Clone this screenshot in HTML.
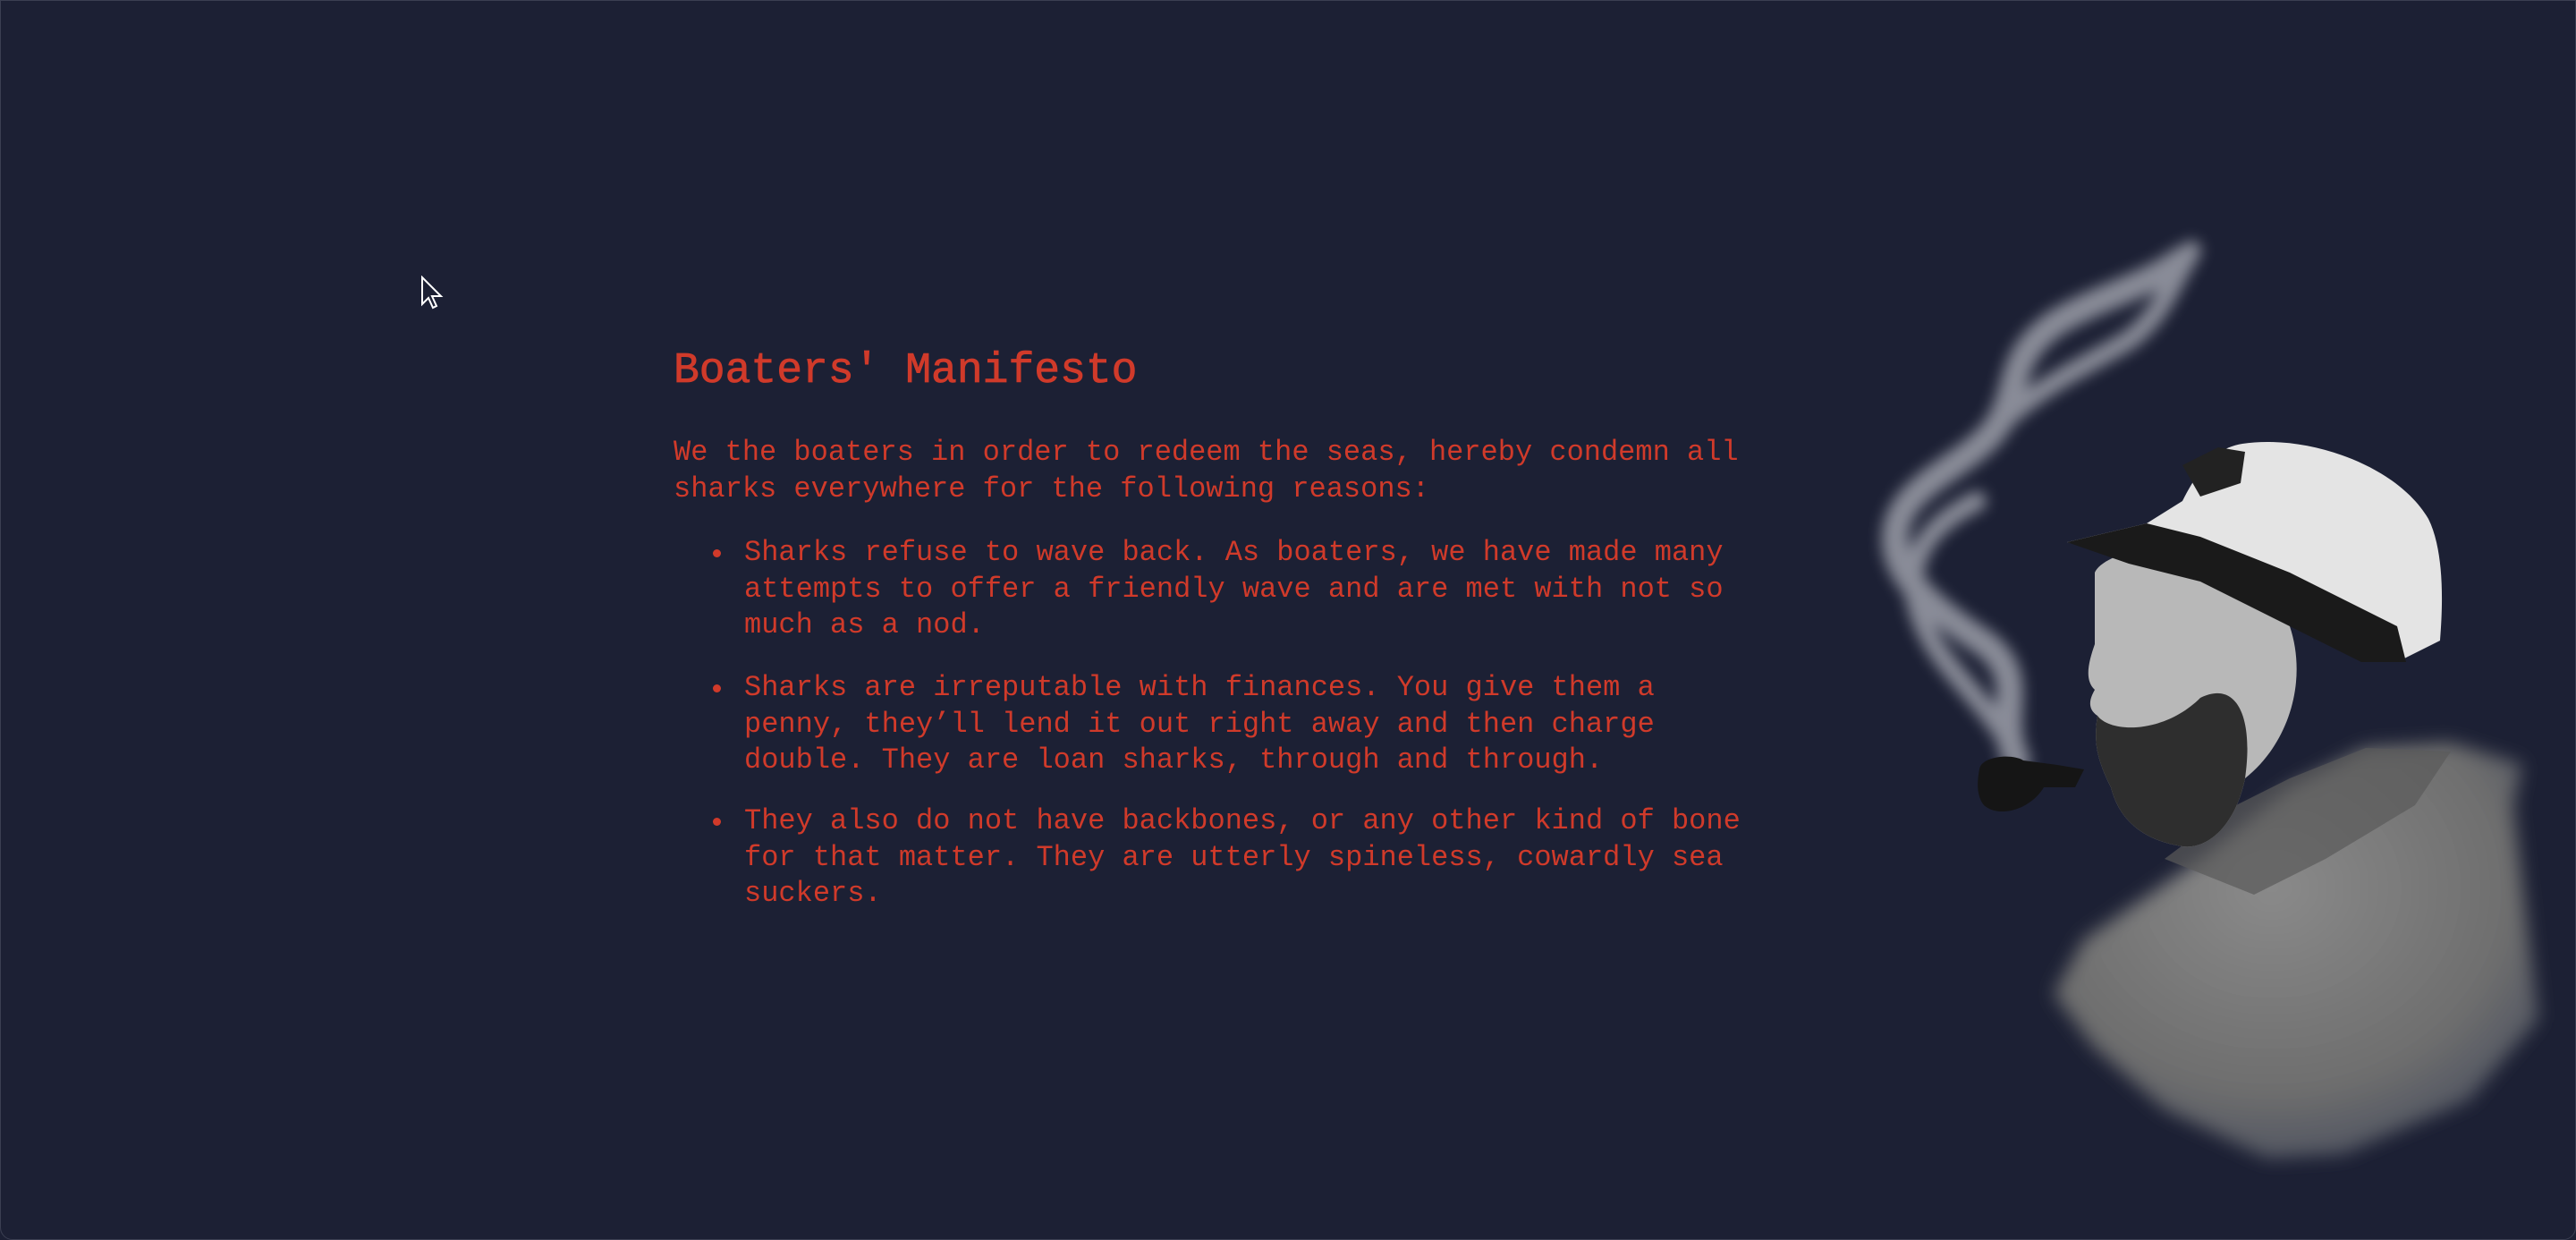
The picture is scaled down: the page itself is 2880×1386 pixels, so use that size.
<!DOCTYPE html>
<html><head><meta charset="utf-8"><style>
html,body{margin:0;padding:0;width:2880px;height:1386px;overflow:hidden;background:#1c2034;}
.win{position:absolute;left:0;top:0;width:2878px;height:1384px;border:1px solid #3b3f52;border-radius:0 0 14px 14px;}
.t{position:absolute;font-family:"Liberation Mono",monospace;color:#d03a2a;white-space:pre;}
h1{position:absolute;left:753px;top:385px;margin:0;font:48px/60px "Liberation Mono",monospace;color:#d03a2a;-webkit-text-stroke:0.8px #d03a2a;}
p{font-size:32px;line-height:40.5px;margin:0;}
.b{position:absolute;left:797px;width:16px;height:16px;}
.b:before{content:"";position:absolute;left:0;top:0;width:9px;height:9px;border-radius:50%;background:#d03a2a;}
</style></head><body>
<div class="win"></div>
<svg style="position:absolute;left:470px;top:308px" width="26" height="40" viewBox="0 0 26 40"><path d="M2 2 L2 32 L9 25 L14 36 L18 34 L13 23 L23 23 Z" fill="#1c2034" stroke="#fff" stroke-width="2"/></svg>
<h1>Boaters' Manifesto</h1>
<p class="t" style="left:753px;top:486px">We the boaters in order to redeem the seas, hereby condemn all
sharks everywhere for the following reasons:</p>
<div class="b" style="top:614px"></div>
<p class="t" style="left:832px;top:598px">Sharks refuse to wave back. As boaters, we have made many
attempts to offer a friendly wave and are met with not so
much as a nod.</p>
<div class="b" style="top:765px"></div>
<p class="t" style="left:832px;top:749px">Sharks are irreputable with finances. You give them a
penny, they’ll lend it out right away and then charge
double. They are loan sharks, through and through.</p>
<div class="b" style="top:914px"></div>
<p class="t" style="left:832px;top:898px">They also do not have backbones, or any other kind of bone
for that matter. They are utterly spineless, cowardly sea
suckers.</p>
<svg style="position:absolute;left:0;top:0" width="2880" height="1386">
<defs>
<filter id="bl" x="-20%" y="-20%" width="140%" height="140%"><feGaussianBlur stdDeviation="8"/></filter>
<filter id="bl2" x="-20%" y="-20%" width="140%" height="140%"><feGaussianBlur stdDeviation="10"/></filter>
<radialGradient id="jk" cx="0.45" cy="0.35" r="0.7"><stop offset="0" stop-color="#8a8a8a"/><stop offset="0.7" stop-color="#6e6e6e"/><stop offset="1" stop-color="#4a4f5e"/></radialGradient>
</defs>
<g filter="url(#bl)" fill="none" stroke="#b8bac2" stroke-linecap="round" opacity="0.7">
<path d="M2255 850 C2230 800 2270 760 2220 720 C2160 680 2110 640 2120 590 C2130 540 2200 520 2230 480 C2260 440 2240 400 2300 360 C2350 330 2400 320 2440 290" stroke-width="30"/>
<path d="M2240 820 C2200 760 2150 730 2140 660 C2135 610 2170 580 2210 560" stroke-width="22"/>
<path d="M2230 480 C2280 430 2330 410 2380 380 C2420 350 2430 310 2450 280" stroke-width="22"/>
<path d="M2140 650 C2120 620 2100 580 2130 560" stroke-width="14"/>
</g>
<g filter="url(#bl2)"><path d="M2296 1111 L2330 1050 L2460 960 L2560 880 L2645 836 L2740 830 L2820 854 L2810 900 L2838 1139 L2760 1230 L2620 1290 L2535 1295 L2420 1240 L2340 1170 Z" fill="url(#jk)"/></g>
<path d="M2420 960 L2500 900 L2560 870 L2645 836 L2740 840 L2700 900 L2600 960 L2520 1000 Z" fill="#5a5a5a" opacity="0.7"/>
<path d="M2342 640 C2350 620 2420 600 2480 610 L2560 700 C2580 760 2560 830 2510 870 C2500 920 2470 950 2440 946 C2400 940 2370 920 2360 880 C2345 850 2340 830 2345 800 C2330 790 2340 775 2342 771 C2330 760 2335 740 2342 720 Z" fill="#b8b8b8"/>
<path d="M2345 800 C2360 820 2420 820 2460 780 C2500 760 2520 800 2510 870 C2500 920 2470 950 2440 946 C2400 940 2370 920 2360 880 C2345 850 2340 830 2345 800 Z" fill="#2e2e2e"/>
<path d="M2213 860 C2215 845 2250 842 2262 850 L2300 855 L2330 860 L2320 880 L2285 880 C2270 905 2235 915 2218 900 C2210 890 2210 875 2213 860 Z" fill="#151515"/>
<path d="M2311 606 L2400 585 L2440 560 C2460 520 2480 500 2507 496 C2580 485 2680 520 2715 580 C2735 620 2730 690 2728 716 L2680 740 L2640 720 L2560 680 L2460 630 L2380 625 Z" fill="#e4e4e4"/>
<path d="M2311 606 L2400 585 L2460 600 L2560 640 L2680 700 L2690 740 L2640 740 L2560 700 L2460 650 L2380 630 Z" fill="#1a1a1a"/>
<path d="M2440 520 L2480 500 L2510 505 L2505 540 L2460 555 Z" fill="#222"/>
</svg>
</body></html>
